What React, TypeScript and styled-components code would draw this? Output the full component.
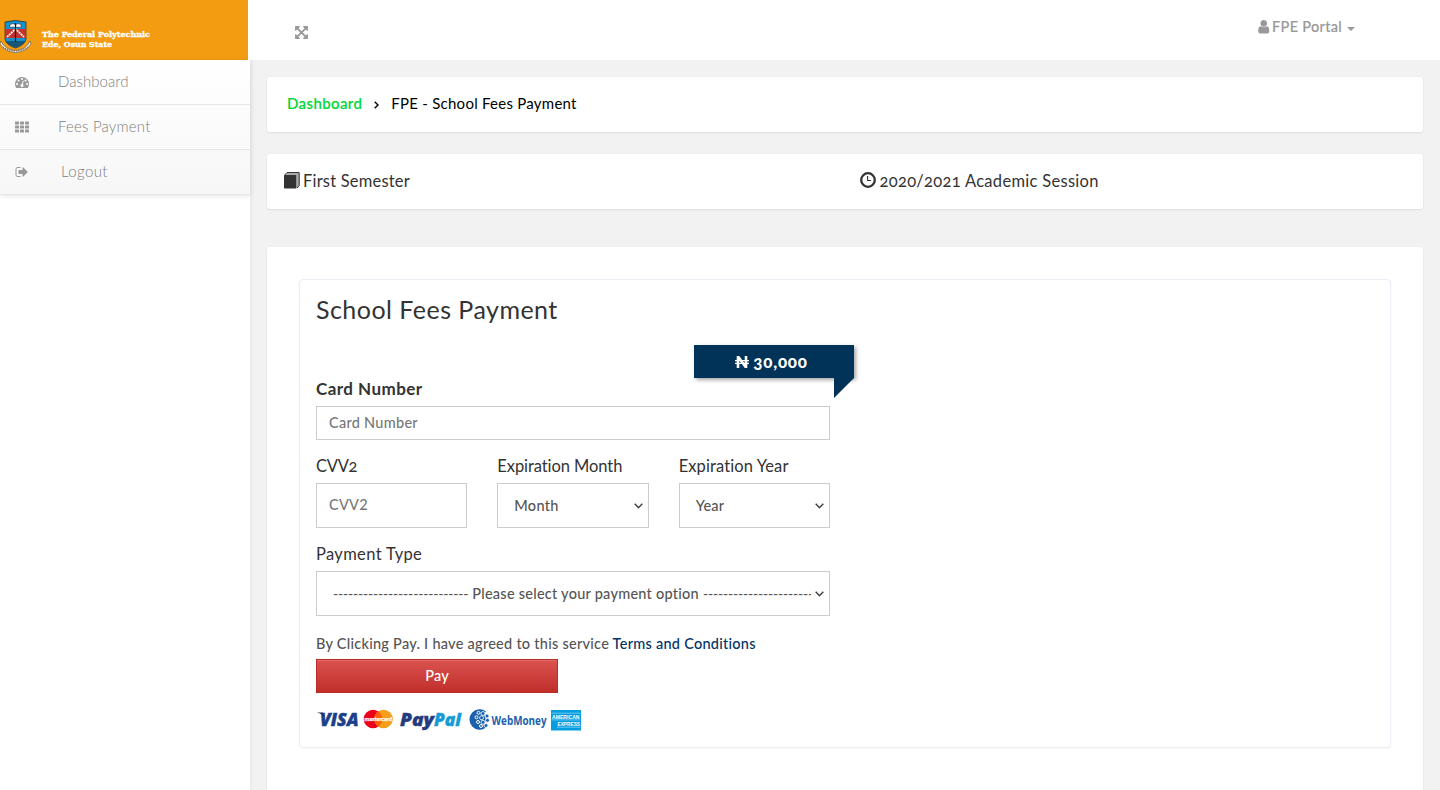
import React from "react";
import styled, { createGlobalStyle } from "styled-components";

const GlobalStyle = createGlobalStyle`
  * { box-sizing: border-box; }
  html, body { margin: 0; height: 100%; overflow: hidden; }
  body { background: #fff; color: #333; font-family: Lato, "Liberation Sans", sans-serif; font-size: 14px; }
`;

const Page = styled.div`
  display: grid;
  grid-template-columns: 250px 1fr;
  grid-template-rows: 60px 1fr;
  height: 790px;
  overflow: hidden;
`;
const TopBar = styled.header`
  grid-column: 1 / 3;
  display: flex;
  background: #fff;
`;
const Brand = styled.div`
  width: 248px;
  height: 60px;
  background: #f39c12;
  padding-top: 19px;
`;
const TopTools = styled.div`
  flex: 1;
  display: flex;
  justify-content: space-between;
  padding: 0 85px 0 46px;
  color: #999;
`;
const ExpandButton = styled.span`
  display: flex;
  padding-top: 25px;
`;
const UserMenu = styled.span`
  display: flex;
  align-items: center;
  height: 54px;
`;
const UserName = styled.span`
  margin: 0 5px 2px 1px;
  font-size: 14.5px;
  font-weight: 500;
  -webkit-text-stroke: 0.15px #999;
  letter-spacing: 0.3px;
`;
const Caret = styled.span`
  margin-top: 4px;
  border: 4px solid transparent;
  border-top-color: #999;
  border-bottom: 0;
`;
const Sidebar = styled.nav`
  background: #fff;
  box-shadow: 1px 0 5px rgba(0, 0, 0, 0.05);
  z-index: 1;
`;
const Menu = styled.div`
  background: linear-gradient(#fff, #f7f7f7);
  box-shadow: 0 1px 5px rgba(0, 0, 0, 0.1);
  clip-path: inset(0 -6px -8px 0);
`;
const MenuItem = styled.a`
  display: flex;
  align-items: center;
  height: 45px;
  padding-left: 15px;
  border-bottom: 1px solid #e7e7e7;
  color: #999;
`;
const MenuIcon = styled.span`
  display: flex;
  width: 43px;
`;
const MenuText = styled.span<{ $indent?: number; $track: number }>`
  margin: 0 0 2px ${(p) => p.$indent ?? 0}px;
  font-size: 15px;
  font-weight: 300;
  color: #808080;
  letter-spacing: ${(p) => p.$track}px;
`;
const Content = styled.main`
  background: #f2f2f2;
  padding: 17px 17px 0;
  overflow: hidden;
`;
const Card = styled.section`
  background: #fff;
  border-radius: 3px;
  box-shadow: 0 0 1px #dfe5f5, 0 1px 2px rgba(0, 0, 0, 0.09);
`;
const Crumbs = styled(Card)`
  display: flex;
  align-items: center;
  height: 55px;
  padding: 0 20px 4px;
  color: #000;
  font-size: 15px;
`;
const CrumbLink = styled.a`
  color: #00d735;
  font-weight: 500;
  -webkit-text-stroke: 0.2px #00d735;
  letter-spacing: 0.4px;
`;
const CrumbArrow = styled.svg`
  margin: 5px 12px 0 12px;
`;
const CrumbText = styled.span`
  letter-spacing: 0.25px;
`;
const Info = styled(Card)`
  display: grid;
  grid-template-columns: 1fr 1fr;
  height: 55px;
  margin-top: 22px;
  padding-left: 17px;
`;
const InfoItem = styled.div<{ $track: number }>`
  display: flex;
  align-items: center;
  gap: 3px;
  padding-bottom: 1px;
  font-size: 16.5px;
  letter-spacing: ${(p) => p.$track}px;
  font-variant-numeric: oldstyle-nums;
  svg { margin-bottom: 2px; }
  &:last-child { padding-left: 6px; gap: 4px; }
`;
const Main = styled(Card)`
  margin-top: 38px;
  height: 560px;
  padding: 32px;
`;
const Panel = styled.div`
  height: 469px;
  border: 1px solid #ecedf5;
  border-radius: 4px;
  box-shadow: 0 1px 2px rgba(0, 0, 0, 0.04);
  padding: 0 16px;
`;
const Title = styled.h3`
  margin: 0;
  padding-top: 14px;
  height: 65px;
  font-size: 25px;
  line-height: 30px;
  font-weight: 400;
  letter-spacing: 0.47px;
`;
const Form = styled.form`
  display: flex;
  flex-direction: column;
  width: 514px;
`;
const Ribbon = styled.div`
  position: relative;
  align-self: flex-end;
  margin-right: -24px;
  width: 160px;
  height: 33px;
  background: #003357;
  color: #fff;
  box-shadow: 2px 2px 4px rgba(0, 0, 0, 0.35);
  display: flex;
  align-items: center;
  justify-content: center;
  padding: 0 5px 0 0;
  font-size: 17px;
  font-weight: 900;
  font-variant-numeric: oldstyle-nums;
  gap: 4px;
  letter-spacing: 0.75px;
  &::after {
    content: "";
    position: absolute;
    top: 33px;
    right: 0;
    border-style: solid;
    border-width: 20px 20px 0 0;
    border-color: #003357 transparent transparent;
  }
`;
const Label = styled.label<{ $bold?: boolean; $track: number }>`
  display: block;
  height: 28px;
  line-height: 22px;
  font-size: ${(p) => (p.$bold ? 17 : 16.5)}px;
  font-weight: ${(p) => (p.$bold ? 700 : 400)};
  letter-spacing: ${(p) => p.$track}px;
  font-variant-numeric: oldstyle-nums;
  white-space: nowrap;
`;
const Input = styled.input<{ $h: number }>`
  display: block;
  width: 100%;
  height: ${(p) => p.$h}px;
  padding: 5px 12px 7px;
  border: 1px solid #ccc;
  border-radius: 0;
  font: 500 14.5px Lato, sans-serif;
  letter-spacing: 0.27px;
  &::placeholder { color: #777; }
`;
const SelectBox = styled.div`
  display: flex;
  align-items: center;
  justify-content: space-between;
  height: 45px;
  padding: 0 5px 1px 16px;
  border: 1px solid #ccc;
  background: #fff;
  color: #555;
  font-size: 14.5px;
  font-weight: 500;
  letter-spacing: 0.25px;
  svg { flex: none; margin-top: 2px; }
`;
const SelectValue = styled.span`
  display: flex;
  gap: 4px;
  max-width: 478px;
  overflow: hidden;
  white-space: nowrap;
`;
const Dashes = styled.span`
  font-size: 14px;
  letter-spacing: -0.2px;
`;
const Columns = styled.div`
  display: grid;
  grid-template-columns: repeat(3, 1fr);
  gap: 30px;
  margin: 15px 0;
`;
const Agreement = styled.p`
  margin: 18px 0 5px;
  font-size: 14.5px;
  line-height: 20px;
  color: #555;
  font-weight: 500;
  letter-spacing: 0.26px;
  white-space: nowrap;
  a { color: #003366; }
`;
const PayButton = styled.button`
  width: 242px;
  height: 34px;
  border: 1px solid #b92c28;
  border-radius: 0;
  background: linear-gradient(#d9534f, #c12e2a);
  box-shadow: inset 0 1px 0 rgba(255, 255, 255, 0.15);
  color: #fff;
  padding-bottom: 3px;
  font: 500 14.5px Lato, sans-serif;
  letter-spacing: 0.2px;
`;
const CardLogos = styled.svg`
  display: block;
  margin-top: 15px;
`;

const paths = {
  user: "M1536 1399q0 109-62.5 187t-150.5 78h-854q-88 0-150.5-78t-62.5-187q0-85 8.5-160.5t31.5-152 58.5-131 94-89 134.5-34.5q131 128 313 128t313-128q76 0 134.5 34.5t94 89 58.5 131 31.5 152 8.5 160.5zm-256-887q0 159-112.5 271.5t-271.5 112.5-271.5-112.5-112.5-271.5 112.5-271.5 271.5-112.5 271.5 112.5 112.5 271.5z",
  logout: "M704 1440q0 4 1 20t.5 26.5-3 23.5-10 19.5-20.5 6.5h-320q-119 0-203.5-84.5t-84.5-203.5v-704q0-119 84.5-203.5t203.5-84.5h320q13 0 22.5 9.5t9.5 22.5q0 4 1 20t.5 26.5-3 23.5-10 19.5-20.5 6.5h-320q-66 0-113 47t-47 113v704q0 66 47 113t113 47h312l11.5 1 11.5 3 8 5.5 7 9 2 13.5zm928-544q0 26-19 45l-544 544q-19 19-45 19t-45-19-19-45v-288h-448q-26 0-45-19t-19-45v-384q0-26 19-45t45-19h448v-288q0-26 19-45t45-19 45 19l544 544q19 19 19 45z",
  gauge: "M384 1152q0-53-37.5-90.5t-90.5-37.5-90.5 37.5-37.5 90.5 37.5 90.5 90.5 37.5 90.5-37.5 37.5-90.5zm192-448q0-53-37.5-90.5t-90.5-37.5-90.5 37.5-37.5 90.5 37.5 90.5 90.5 37.5 90.5-37.5 37.5-90.5zm428 481l101-382q6-26-7.5-48.5t-38.5-29.5-48 6.5-30 39.5l-101 382q-60 5-107 43.5t-63 98.5q-20 77 20 146t117 89 146-20 89-117q16-60-6-117t-72-91zm660-33q0-53-37.5-90.5t-90.5-37.5-90.5 37.5-37.5 90.5 37.5 90.5 90.5 37.5 90.5-37.5 37.5-90.5zm-640-640q0-53-37.5-90.5t-90.5-37.5-90.5 37.5-37.5 90.5 37.5 90.5 90.5 37.5 90.5-37.5 37.5-90.5zm448 192q0-53-37.5-90.5t-90.5-37.5-90.5 37.5-37.5 90.5 37.5 90.5 90.5 37.5 90.5-37.5 37.5-90.5zm320 448q0 261-141 483-19 29-54 29h-1402q-35 0-54-29-141-221-141-483 0-182 71-348t191-286 286-191 348-71 348 71 286 191 191 286 71 348z",
  expand: "M1411 541l-355 355 355 355 144-144q29-31 70-14 39 17 39 59v448q0 26-19 45t-45 19h-448q-42 0-59-40-17-39 14-69l144-144-355-355-355 355 144 144q31 30 14 69-17 40-59 40h-448q-26 0-45-19t-19-45v-448q0-42 40-59 39-17 69 14l144 144 355-355-355-355-144 144q-19 19-45 19-12 0-24-5-40-17-40-59v-448q0-26 19-45t45-19h448q42 0 59 40 17 39-14 69l-144 144 355 355 355-355-144-144q-31-30-14-69 17-40 59-40h448q26 0 45 19t19 45v448q0 42-39 59-13 5-25 5-26 0-45-19z",
};

const Glyph = ({ name, size = 14 }: { name: keyof typeof paths; size?: number }) => (
  <svg width={size} height={size} viewBox="0 0 1792 1792" fill="currentColor">
    <path d={paths[name]} />
  </svg>
);

const GridGlyph = () => (
  <svg width="14" height="12" viewBox="0 0 14 12" fill="currentColor">
    {[0, 4, 8].map((y) => [0, 5, 10].map((x) => <rect key={`${x}-${y}`} x={x} y={y + 0.5} width="4" height="3" rx="0.6" />))}
  </svg>
);

const BookGlyph = () => (
  <svg width="16" height="17" viewBox="0 0 16 17">
    <path d="M3.2 0.5H15.2V13.5L12.5 16.5V3.5H0.5Z" fill="#aaa" />
    <path d="M0.5 3.2L3 0.5H15.2V13.6L13 16" fill="none" stroke="#333" />
    <rect y="3" width="12.4" height="13.5" rx="0.7" fill="#333" />
  </svg>
);

const ClockGlyph = () => (
  <svg width="16" height="16" viewBox="0 0 16 16" fill="none" stroke="#333">
    <circle cx="8" cy="8" r="6.8" strokeWidth="2.3" />
    <path d="M7.6 4V8.5H11" strokeWidth="1.1" />
  </svg>
);

const Chevron = () => (
  <svg width="9" height="6" viewBox="0 0 9 6" fill="none" stroke="#444" strokeWidth="1.5">
    <path d="M0.7 0.8L4.500 4.700L8.300 0.8" />
  </svg>
);

const Select = ({ children }: { children: React.ReactNode }) => (
  <SelectBox role="combobox">
    <SelectValue>{children}</SelectValue>
    <Chevron />
  </SelectBox>
);

const BrandMark = () => (
  <svg width="160" height="36" viewBox="0 0 160 36">
    <path d="M1 22Q5 31 15.500 31.500Q26 31 30 22L31 25Q26 33 15.500 33.500Q5 33 0 25Z" fill="#eee" stroke="#6b5a45" strokeWidth="0.7" />
    <path d="M3 28Q15 36 28 28" fill="none" stroke="#444" strokeWidth="1" strokeDasharray="1 1.300" />
    <path d="M5 3Q15 0 26 3V20Q25 26 15.500 29Q6 26 5 20Z" fill="#1491cf" stroke="#263238" strokeWidth="0.8" />
    <path d="M5.400 10H25.600V19H5.400Z" fill="#c8322d" />
    <path d="M7 18L15.500 10L24 18" fill="none" stroke="#fff" strokeWidth="1.700" strokeDasharray="2 0.700" />
    <path d="M5.800 22H25.200Q23 26 15.500 28.500Q8 26 5.800 22Z" fill="#175675" />
    <path d="M10 5.500Q13 4 15.500 5.500Q18 4 21 5.500V8.500Q18 7.500 15.500 8.500Q13 7.500 10 8.500Z" fill="#fff" stroke="#222" strokeWidth="0.500" />
    <path d="M15.500 4V23" stroke="#171b20" strokeWidth="1.300" />
    <g fill="#fff" stroke="#fff" strokeWidth="0.35" fontFamily="'DejaVu Serif', serif" fontWeight="700" fontSize="8">
      <text x="42" y="18" textLength="108" lengthAdjust="spacingAndGlyphs">The Federal Polytechnic</text>
      <text x="42" y="28" textLength="70" lengthAdjust="spacingAndGlyphs">Ede, Osun State</text>
    </g>
  </svg>
);

const PaymentLogos = () => (
  <CardLogos width="266" height="24" viewBox="0 0 266 24">
    <g fontFamily="'Open Sans', sans-serif" fontStyle="italic" fontWeight="800">
      <text x="4" y="18" fontSize="17.500" fill="#1c3f8b" stroke="#1c3f8b" strokeWidth="0.5" textLength="38.500" lengthAdjust="spacingAndGlyphs">VISA</text>
      <path d="M0.500 4.500H7L9 9Q5 5 0.500 4.500Z" fill="#1c2e70" />
      <text x="84" y="17.500" fontSize="17" fill="#253b80" stroke="#253b80" strokeWidth="0.4" textLength="34" lengthAdjust="spacingAndGlyphs">Pay</text>
      <text x="118" y="17.500" fontSize="17" fill="#179bd7" stroke="#179bd7" strokeWidth="0.4" textLength="27" lengthAdjust="spacingAndGlyphs">Pal</text>
    </g>
    <circle cx="57" cy="11" r="9.300" fill="#eb001b" />
    <circle cx="67.500" cy="11" r="9.300" fill="#f79e1b" />
    <path d="M62.250 3.300A9.300 9.300 0 0 1 62.250 18.700A9.300 9.300 0 0 1 62.250 3.300Z" fill="#ff5f00" />
    <text x="48.500" y="13" fontSize="5.500" fontWeight="700" fontFamily="Lato" fill="#fff" stroke="#fff" strokeWidth="0.25" textLength="27.500" lengthAdjust="spacingAndGlyphs">mastercard</text>
    <path d="M170 3.500A10.200 10.200 0 1 0 170 19.500L167.500 17Q172 12 167.500 6Z" fill="#1b61ad" />
    <g fill="none" stroke="#fff" strokeWidth="1">
      <circle cx="162.500" cy="4.800" r="1.500" />
      <circle cx="160.500" cy="9.300" r="1.500" />
      <circle cx="162" cy="14" r="1.500" />
      <circle cx="165" cy="18" r="1.500" />
    </g>
    <g fill="#1b61ad" stroke="#fff" strokeWidth="0.8">
      <circle cx="167" cy="5.500" r="2" />
      <circle cx="165.500" cy="9.800" r="2" />
      <circle cx="167" cy="14.300" r="2" />
      <circle cx="171" cy="8" r="2" />
      <circle cx="171.500" cy="12.300" r="2" />
      <circle cx="170" cy="17.500" r="2" />
    </g>
    <text x="175.500" y="16.500" fontSize="12.500" fontWeight="700" fontFamily="'Open Sans', sans-serif" fill="#1b5fae" textLength="55" lengthAdjust="spacingAndGlyphs">WebMoney</text>
    <rect x="235" y="2" width="30" height="20.500" fill="#069de0" />
    <g fill="#fff" fontFamily="'Liberation Sans'" fontWeight="700" fontSize="5.500">
      <text x="236" y="10.500" textLength="27.500" lengthAdjust="spacingAndGlyphs">AMERICAN</text>
      <text x="241.500" y="17.800" textLength="22.500" lengthAdjust="spacingAndGlyphs">EXPRESS</text>
    </g>
    <path d="M235.500 5.200H264.500M235.500 11.900H264.500M241 19.200H264.500" stroke="#d5effa" strokeWidth="0.5" />
  </CardLogos>
);

const dashes = "-".repeat(27);

export default function App() {
  return (
    <Page>
      <GlobalStyle />
      <TopBar>
        <Brand><BrandMark /></Brand>
        <TopTools>
          <ExpandButton><Glyph name="expand" size={15} /></ExpandButton>
          <UserMenu>
            <Glyph name="user" size={15.5} />
            <UserName>FPE Portal</UserName>
            <Caret />
          </UserMenu>
        </TopTools>
      </TopBar>
      <Sidebar>
        <Menu>
          <MenuItem><MenuIcon><Glyph name="gauge" /></MenuIcon><MenuText $track={0.05}>Dashboard</MenuText></MenuItem>
          <MenuItem><MenuIcon><GridGlyph /></MenuIcon><MenuText $track={0.19}>Fees Payment</MenuText></MenuItem>
          <MenuItem><MenuIcon><Glyph name="logout" /></MenuIcon><MenuText $indent={3} $track={0.4}>Logout</MenuText></MenuItem>
        </Menu>
      </Sidebar>
      <Content>
        <Crumbs>
          <CrumbLink>Dashboard</CrumbLink>
          <CrumbArrow width="5" height="8" viewBox="0 0 5 8" fill="none" stroke="#000" strokeWidth="1.4"><path d="M0.700 0.700L4 4L0.700 7.300" /></CrumbArrow>
          <CrumbText>FPE - School Fees Payment</CrumbText>
        </Crumbs>
        <Info>
          <InfoItem $track={0.2}><BookGlyph /><span>First Semester</span></InfoItem>
          <InfoItem $track={0.3}><ClockGlyph /><span>2020/2021 Academic Session</span></InfoItem>
        </Info>
        <Main>
          <Panel>
            <Title>School Fees Payment</Title>
            <Form>
              <Ribbon>
                <svg width="14" height="12" viewBox="0 0 14 12" fill="none" stroke="#fff">
                  <path d="M3 12V0.500L11 11.500V0" strokeWidth="2.600" />
                  <path d="M0 4.700H14M0 7.300H14" strokeWidth="1.200" />
                </svg>
                <span>30,000</span>
              </Ribbon>
              <Label $bold $track={0.45}>Card Number</Label>
              <Input $h={34} placeholder="Card Number" />
              <Columns>
                <div><Label $track={-0.25}>CVV2</Label><Input $h={45} placeholder="CVV2" /></div>
                <div><Label $track={-0.08}>Expiration Month</Label><Select>Month</Select></div>
                <div><Label $track={0.1}>Expiration Year</Label><Select>Year</Select></div>
              </Columns>
              <Label $track={0.35}>Payment Type</Label>
              <Select>
                <Dashes>{dashes}</Dashes>
                <span>Please select your payment option</span>
                <Dashes>{dashes}</Dashes>
              </Select>
              <Agreement>By Clicking Pay. I have agreed to this service <a>Terms and Conditions</a></Agreement>
              <PayButton type="button">Pay</PayButton>
              <PaymentLogos />
            </Form>
          </Panel>
        </Main>
      </Content>
    </Page>
  );
}
